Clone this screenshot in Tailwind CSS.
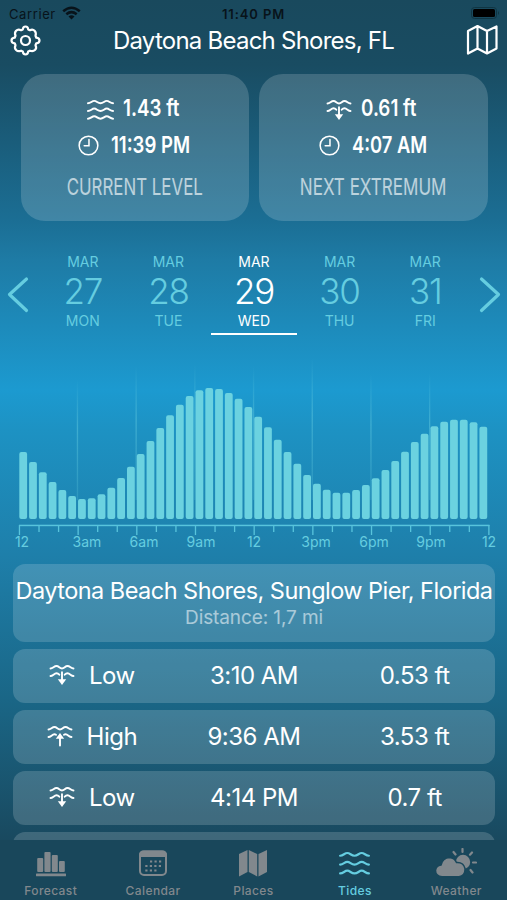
<!DOCTYPE html>
<html lang="en">
<head>
<meta charset="utf-8">
<title>Tides</title>
<script src="https://cdn.jsdelivr.net/npm/@tailwindcss/browser@4"></script>
</head>
<body class="font-['Inter',sans-serif] bg-[#19495f]">
<svg class="hidden">
  <symbol id="waves" viewBox="0 0 28 22"><g fill="none" stroke="currentColor" stroke-width="2" stroke-linecap="round"><path d="M1 4C4 4 5 1.5 7.5 1.5S11 4 14 4S18 1.500 20.500 1.500S24 4 27 4"/><path d="M1 12C4 12 5 9.500 7.500 9.500S11 12 14 12S18 9.500 20.500 9.500S24 12 27 12"/><path d="M1 20C4 20 5 17.500 7.500 17.500S11 20 14 20S18 17.500 20.500 17.500S24 20 27 20"/></g></symbol>
  <symbol id="low" viewBox="0 0 26 22"><g fill="none" stroke="currentColor" stroke-width="1.9" stroke-linecap="round"><path d="M1.500 4.500C4 4.500 5 2 7.500 2S10.500 4.500 13 4.500S16 2 18.500 2S22 4.500 24.500 4.500M1.500 12C4 12 5 9.300 7.500 9.300Q9 9.300 10.300 10.700M24.500 12C22 12 21 9.300 18.500 9.300Q17 9.300 15.700 10.700M13 8.200V17"/></g><path d="M8.800 15.300H17.200L13 21Z" fill="currentColor"/></symbol>
  <symbol id="high" viewBox="0 0 26 22"><g fill="none" stroke="currentColor" stroke-width="1.9" stroke-linecap="round"><path d="M1.500 4.500C4 4.500 5 2 7.500 2S10.500 4.500 13 4.500S16 2 18.500 2S22 4.500 24.500 4.500M1.500 12C4 12 5 9.300 7.500 9.300Q8.300 9.300 9 9.700M24.500 12C22 12 21 9.300 18.500 9.300Q17.700 9.300 17 9.700M13 11V20.500"/></g><path d="M8.800 13.700H17.200L13 8Z" fill="currentColor"/></symbol>
  <symbol id="clock" viewBox="0 0 22 22"><g fill="none" stroke="currentColor" stroke-width="1.600" stroke-linecap="round"><circle cx="11" cy="11" r="9.800"/><path d="M11.500 4.800V11.300H6.500"/></g></symbol>
</svg>
<main class="w-[507px] h-[900px] overflow-hidden flex flex-col bg-[linear-gradient(180deg,#19495d_0px,#194c62_65px,#1b6e94_220px,#1e7ba5_260px,#1c9ad0_390px,#1d92c3_430px,#1e7faa_555px,#1a6686_700px,#19495f_840px)]">
  <div class="h-[840px] shrink-0 overflow-hidden">
    <header class="h-[74px]">
      <div class="h-[24px] pt-[4px] px-[9px] grid grid-cols-3 items-center text-[13px] leading-[20px] text-[#08131a]">
        <div class="flex items-center gap-[6px]"><span class="tracking-[0.6px]">Carrier</span>
          <svg class="w-[19px] h-[14px] -mt-[2px]" viewBox="0 0 19 14"><g fill="none" stroke="currentColor" stroke-width="2.500"><path d="M1.200 5.200Q9.500 -1.800 17.800 5.200"/><path d="M4.300 8.300Q9.500 4 14.700 8.300"/></g><path d="M6.500 10.400Q9.500 8.200 12.500 10.400L9.500 13.500Z" fill="currentColor"/></svg>
        </div>
        <div class="text-center font-semibold tracking-[0.9px] whitespace-nowrap">11:40 PM</div>
        <div class="flex justify-end items-center"><svg class="w-[29px] h-[12px] -mr-[2px] -mt-[2px]" viewBox="0 0 29 12"><rect x=".5" y=".5" width="25" height="11" rx="3" fill="none" stroke="#103543"/><rect x="2" y="2" width="22" height="8" rx="1.500" fill="#000"/><path d="M27 4Q29 6 27 8Z" fill="#103543"/></svg></div>
      </div>
      <div class="flex justify-between items-center h-[32px] pl-[10px] pr-[8px] text-white">
        <svg class="w-[31px] h-[31px]" viewBox="0 0 31 31" fill="none" stroke="currentColor" stroke-width="2.200" stroke-linejoin="round"><path d="M12.800 4.500Q13 1.500 15.500 1.500T18.200 4.500L19.800 5.200Q22.700 3.700 24.600 5.700T25.500 10.800L26.300 12.700Q29.500 13.100 29.500 15.500T26.300 18.300L25.500 20.200Q27 23.200 25 25T19.900 25.700L18.200 26.400Q18 29.500 15.500 29.500T12.800 26.400L11.100 25.700Q8.100 27 6.100 25T5.500 20.200L4.700 18.300Q1.500 18 1.500 15.500T4.700 12.700L5.500 10.800Q4.200 7.700 6.100 5.700T11.200 5.200Z"/><circle cx="15.500" cy="15.500" r="4.500"/></svg>
        <h1 class="text-[24px] font-normal whitespace-nowrap tracking-[-0.760px] mt-[1px]">Daytona Beach Shores, FL</h1>
        <svg class="w-[33px] h-[32px]" viewBox="0 0 33 32" fill="none" stroke="currentColor" stroke-width="2.200" stroke-linejoin="round"><path d="M2 7L11.500 2L21 7L30.500 2.500V24.500L21 29.500L11.500 24.500L2 29.500ZM11.500 2V24.500M21 7V29.500"/></svg>
      </div>
    </header>

    <section class="flex gap-[10px] pl-[21px] h-[147px] text-white text-center">
      <article class="w-[228px] rounded-[24px] bg-white/17 pt-[18px]">
        <div class="flex h-[32px] items-center justify-center gap-[9px] pr-[4px]"><svg class="w-[27px] h-[22px] mt-[3px]"><use href="#waves"/></svg><span class="w-[57px] text-[23.500px] font-semibold"><span class="inline-block whitespace-nowrap origin-left scale-x-[0.800]">1.43 ft</span></span></div>
        <div class="flex h-[32px] mt-[5px] items-center justify-center gap-[12px] pr-[2px]"><svg class="w-[21px] h-[21px] mt-[1px]"><use href="#clock"/></svg><span class="w-[79px] text-[23.500px] font-semibold"><span class="inline-block whitespace-nowrap origin-left scale-x-[0.790]">11:39 PM</span></span></div>
        <div class="mt-[10px] h-[32px] leading-[32px] text-[23.500px] text-white/65"><span class="inline-block whitespace-nowrap scale-x-[0.718]">CURRENT LEVEL</span></div>
      </article>
      <article class="w-[229px] rounded-[24px] bg-white/17 pt-[18px]">
        <div class="flex h-[32px] items-center justify-center gap-[9px] pr-[4px]"><svg class="w-[26px] h-[22px] mt-[3px]"><use href="#low"/></svg><span class="w-[57px] text-[23.500px] font-semibold"><span class="inline-block whitespace-nowrap origin-left scale-x-[0.800]">0.61 ft</span></span></div>
        <div class="flex h-[32px] mt-[5px] items-center justify-center gap-[12px] pr-[2px]"><svg class="w-[21px] h-[21px] mt-[1px]"><use href="#clock"/></svg><span class="w-[74px] text-[23.500px] font-semibold"><span class="inline-block whitespace-nowrap origin-left scale-x-[0.780]">4:07 AM</span></span></div>
        <div class="mt-[10px] h-[32px] leading-[32px] text-[23.500px] text-white/65"><span class="inline-block whitespace-nowrap scale-x-[0.725]">NEXT EXTREMUM</span></div>
      </article>
    </section>

    <nav class="h-[134px] pt-[31px] flex pl-[7px] text-[#65cde0]">
      <svg class="w-[33px] h-[37px] mt-[24px] shrink-0" viewBox="0 0 33 37" fill="none" stroke="currentColor" stroke-width="3.200" stroke-linecap="round" stroke-linejoin="round"><path d="M19.500 3L2.500 18.500L19.500 34.500"/></svg>
      <div class="flex w-[428px] shrink-0 text-center text-[14px] leading-[20px]">
        <div class="flex-1"><div>MAR</div><div class="text-[35px] leading-[38px] font-light tracking-[-1.200px]">27</div><div class="mt-[1px]">MON</div></div>
        <div class="flex-1"><div>MAR</div><div class="text-[35px] leading-[38px] font-light tracking-[-1.200px]">28</div><div class="mt-[1px]">TUE</div></div>
        <div class="flex-1 text-white"><div>MAR</div><div class="text-[35px] leading-[38px] font-light tracking-[-1.200px]">29</div><div class="mt-[1px]">WED</div><div class="h-[2.500px] mt-[1.500px] bg-white"></div></div>
        <div class="flex-1"><div>MAR</div><div class="text-[35px] leading-[38px] font-light tracking-[-1.200px]">30</div><div class="mt-[1px]">THU</div></div>
        <div class="flex-1"><div>MAR</div><div class="text-[35px] leading-[38px] font-light tracking-[-1.200px]">31</div><div class="mt-[1px]">FRI</div></div>
      </div>
      <svg class="w-[33px] h-[37px] mt-[24px] shrink-0" viewBox="0 0 33 37" fill="none" stroke="currentColor" stroke-width="3.200" stroke-linecap="round" stroke-linejoin="round"><path d="M13.500 3L30.500 18.500L13.500 34.500"/></svg>
    </nav>

    <svg id="chart" class="block w-[507px] h-[209px] font-['Inter',sans-serif]" viewBox="0 355 507 209">
      <defs><linearGradient id="fade" x1="0" y1="0" x2="0" y2="1"><stop offset="0" stop-color="#65cde0" stop-opacity="0"/><stop offset=".4" stop-color="#65cde0" stop-opacity=".45"/><stop offset="1" stop-color="#65cde0" stop-opacity=".2"/></linearGradient></defs>
    </svg>

    <section class="px-[13px] flex flex-col gap-[7px] text-white pr-[12px]">
      <div class="h-[78px] rounded-[12px] bg-white/16 text-center pt-[12px]">
        <div class="text-[23.500px] leading-[30px] whitespace-nowrap tracking-[-0.530px]">Daytona Beach Shores, Sunglow Pier, Florida</div>
        <div class="text-[19px] leading-[24px] text-white/55 tracking-[-0.100px]">Distance: 1,7 mi</div>
      </div>
      <div class="h-[54px] rounded-[12px] bg-white/17 grid grid-cols-3 items-center text-center text-[24px] tracking-[-0.500px]">
        <div class="flex items-center justify-center gap-[14px] pr-[3px]"><svg class="w-[26px] h-[22px] -mt-[2px]"><use href="#low"/></svg>Low</div><div>3:10 AM</div><div>0.53 ft</div>
      </div>
      <div class="h-[54px] rounded-[12px] bg-white/17 grid grid-cols-3 items-center text-center text-[24px] tracking-[-0.500px]">
        <div class="flex items-center justify-center gap-[14px] pr-[3px]"><svg class="w-[26px] h-[22px] -mt-[2px]"><use href="#high"/></svg>High</div><div>9:36 AM</div><div>3.53 ft</div>
      </div>
      <div class="h-[54px] rounded-[12px] bg-white/17 grid grid-cols-3 items-center text-center text-[24px] tracking-[-0.500px]">
        <div class="flex items-center justify-center gap-[14px] pr-[3px]"><svg class="w-[26px] h-[22px] -mt-[2px]"><use href="#low"/></svg>Low</div><div>4:14 PM</div><div>0.7 ft</div>
      </div>
      <div class="h-[54px] rounded-[12px] bg-white/17"></div>
    </section>
  </div>

  <footer class="h-[60px] bg-[#19475b] grid grid-cols-5 text-center text-[12px] leading-[16px] tracking-[0.4px] font-medium text-[#81888d]">
    <div class="flex flex-col items-center pt-[8px] gap-[4px]"><svg class="w-[32px] h-[31px]" viewBox="0 0 32 31" fill="currentColor"><rect x="2.200" y="10" width="6" height="14" rx="1"/><rect x="9.400" y="4" width="6.200" height="20" rx="1"/><rect x="16.800" y="7" width="6" height="17" rx="1"/><rect x="24" y="13" width="5.800" height="11" rx="1"/><rect x="1" y="25.500" width="30" height="2.700" rx=".5"/></svg><span>Forecast</span></div>
    <div class="flex flex-col items-center pt-[8px] gap-[4px] pl-[2px]"><svg class="w-[30px] h-[31px]" viewBox="0 0 30 31"><rect x="2" y="3.500" width="26" height="23.500" rx="4" fill="none" stroke="currentColor" stroke-width="2"/><path d="M1 9V7Q1 2.500 5.500 2.500H24.500Q29 2.500 29 7V9Z" fill="currentColor"/><path d="M12 13.500H25M7.300 18H25M7.300 22.500H20" stroke="currentColor" stroke-width="2.200" stroke-dasharray="2.200 2.300"/></svg><span>Calendar</span></div>
    <div class="flex flex-col items-center pt-[8px] gap-[4px]"><svg class="w-[30px] h-[31px]" viewBox="0 0 30 31" fill="currentColor"><path d="M1 6L9.500 2V24L1 28.500ZM10.800 2L19.200 6V28.500L10.800 24ZM20.500 6L29 2V24L20.500 28.500Z"/></svg><span>Places</span></div>
    <div class="flex flex-col items-center pt-[8px] gap-[4px] text-[#65cde0]"><svg class="w-[31px] h-[31px] pt-[3px]"><use href="#waves" width="31" height="25"/></svg><span>Tides</span></div>
    <div class="flex flex-col items-center pt-[8px] gap-[4px]"><svg class="w-[42px] h-[31px]" viewBox="0 0 42 31"><circle cx="28" cy="14" r="7.200" fill="currentColor"/><path d="M27.500 1V4M18.500 4L20.500 6.500M37 4.500L35 6.700M38 14.500H41M35.500 22L37.500 24.500" stroke="currentColor" stroke-width="2.200" stroke-linecap="round"/><path d="M7 28.800Q.5 28 .5 22.500Q1 17.500 6 17Q7.500 10 14.500 9.500Q19.500 10 21.500 14.500Q28.500 14 30 20.500Q30.500 27.500 24 28.800Z" fill="currentColor" stroke="#19475b" stroke-width="1.500"/></svg><span>Weather</span></div>
  </footer>
</main>
<script>
const heights=[67,57,46.7,37,29,23,20,20.7,24.7,31.300,41,52.300,65,78,91,103.700,114.300,123,128.700,131,130,126,120.300,112,102.300,91.700,79.300,67,55.300,44,35.300,29.300,26.300,26.300,29,34,40.700,49,58,67.300,77,85.300,92.700,97.300,99.300,99.300,96.700,92.300];
const tops=[380,366,364,366,358,374,374];
let s='';
tops.forEach((t,i)=>{s+=`<rect x="${76.800+58.700*i}" y="${t}" width="1.300" height="${500-t}" fill="url(#fade)"/>`});
heights.forEach((h,i)=>{s+=`<rect x="${(19.300+9.790*i).toFixed(2)}" y="${519-h}" width="7.800" height="${h}" rx="2" fill="#6bd2e0"/>`});
s+='<rect x="19" y="524.700" width="470.500" height="1.500" fill="#58c4dc"/>';
for(let i=0;i<25;i++)s+=`<rect x="${(18.800+19.560*i).toFixed(2)}" y="525" width="1.300" height="${i%3?7:10}" fill="#58c4dc"/>`;
[['12',22],['3am',87],['6am',144],['9am',201],['12',254],['3pm',316],['6pm',374],['9pm',431],['12',489]].forEach(([t,x])=>{s+=`<text x="${x}" y="547.200" text-anchor="middle" font-size="14" fill="#65cde0">${t}</text>`});
document.getElementById('chart').insertAdjacentHTML('beforeend',s);
</script>
</body>
</html>
